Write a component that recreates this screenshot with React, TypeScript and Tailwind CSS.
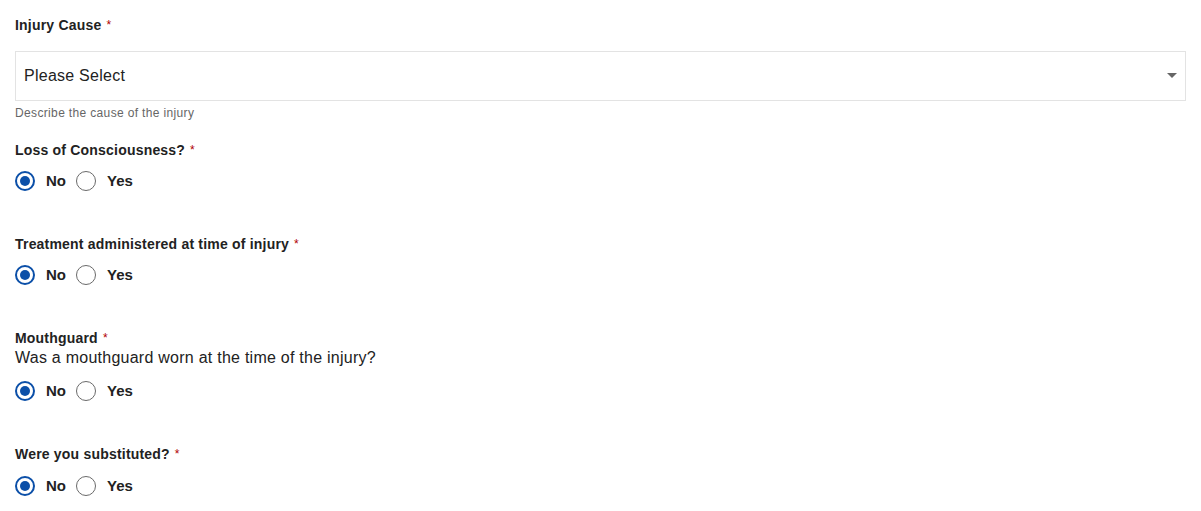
import React from "react";

const font = { fontFamily: '"Liberation Sans", Arial, Helvetica, sans-serif' };

function Label({ text }: { text: string }) {
  return (
    <div className="h-[20px] text-[14px] font-bold leading-[20px] tracking-[0.2px] text-[#222222]">
      {text}
      <span className="ml-[5px] align-top text-[12px] font-normal leading-[20px] text-[#b00000]">*</span>
    </div>
  );
}

function Radio({ checked }: { checked: boolean }) {
  return checked ? (
    <span className="flex h-[20px] w-[20px] items-center justify-center rounded-full border-2 border-[#0b4fa8]">
      <span className="h-[10px] w-[10px] rounded-full bg-[#0b4fa8]" />
    </span>
  ) : (
    <span className="h-[20px] w-[20px] rounded-full border-[1.75px] border-[#6a6a6a]" />
  );
}

function RadioRow({ className }: { className: string }) {
  return (
    <div className={`flex h-[20px] items-center text-[15px] font-bold text-[#222222] ${className}`}>
      <Radio checked />
      <span className="ml-[11px]">No</span>
      <span className="ml-[10px] flex">
        <Radio checked={false} />
      </span>
      <span className="ml-[11px]">Yes</span>
    </div>
  );
}

export default function App() {
  return (
    <div className="min-h-[511px] bg-white px-[15px] pt-[15px]" style={font}>
      <Label text="Injury Cause" />
      <div className="mt-[16px] flex h-[50px] items-center justify-between border border-[#e3e3e3] pl-[8px] pr-[8px] text-[16px] tracking-[0.25px] text-[#222222]">
        <span>Please Select</span>
        <svg width="10" height="6" viewBox="0 0 10 6">
          <path d="M0 0 H10 L5 5 Z" fill="#666666" />
        </svg>
      </div>
      <div className="mt-[4px] h-[16px] text-[12px] leading-[16px] tracking-[0.35px] text-[#666666]">Describe the cause of the injury</div>

      <div className="mt-[19px]">
        <Label text="Loss of Consciousness?" />
      </div>
      <RadioRow className="mt-[11px]" />

      <div className="mt-[43px]">
        <Label text="Treatment administered at time of injury" />
      </div>
      <RadioRow className="mt-[11px]" />

      <div className="mt-[43px]">
        <Label text="Mouthguard" />
      </div>
      <div className="h-[20px] text-[16px] leading-[20px] tracking-[0.25px] text-[#222222]">Was a mouthguard worn at the time of the injury?</div>
      <RadioRow className="mt-[13px]" />

      <div className="mt-[43px]">
        <Label text="Were you substituted?" />
      </div>
      <RadioRow className="mt-[12px]" />
    </div>
  );
}
